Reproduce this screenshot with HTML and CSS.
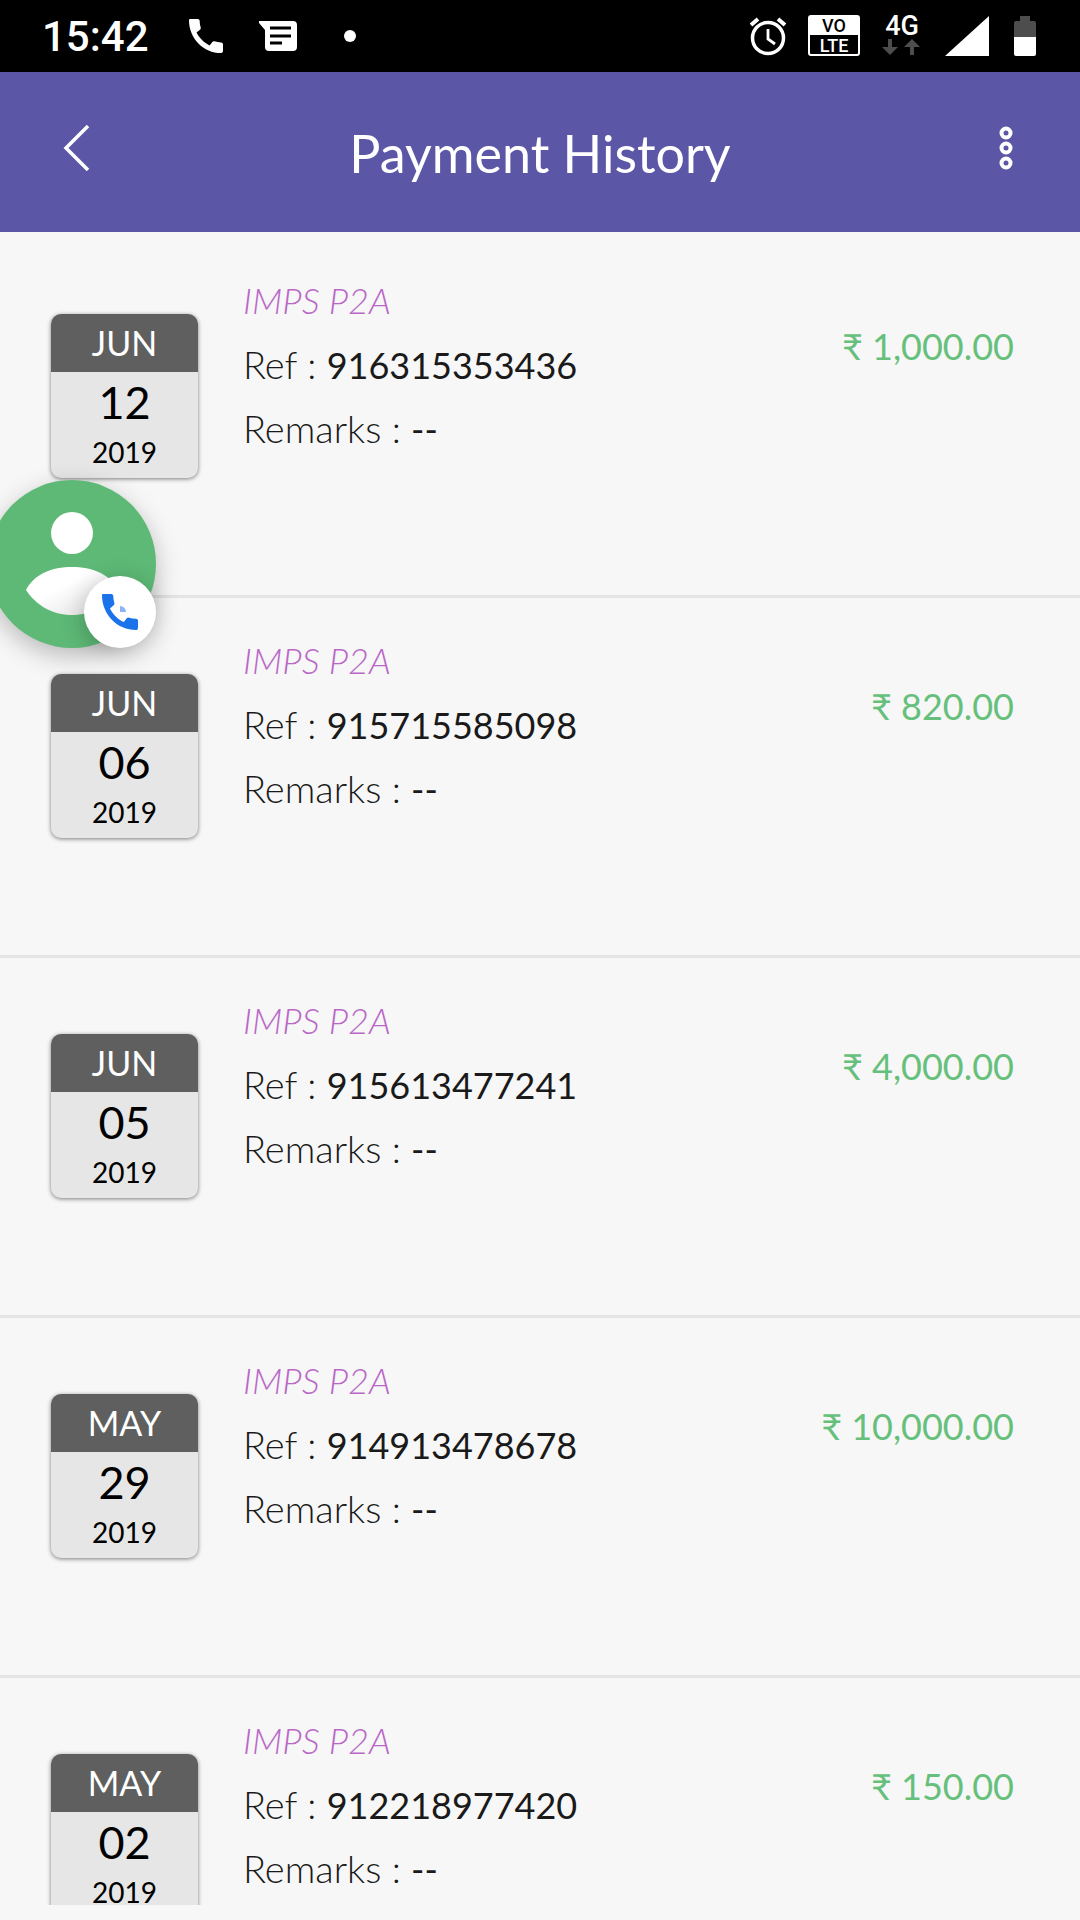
FILE: index.html
```
<!DOCTYPE html>
<html lang="en">
<head>
    <meta charset="UTF-8">
    <meta name="viewport" content="width=device-width, initial-scale=1.0">
    <title>Payment History</title>
    <link rel="stylesheet" href="styles.css">
</head>
<body>
    <div class="status-bar">
        <div class="status-left">
            <span class="clock">15:42</span>
            <svg width="34" height="34" viewBox="3 3 18 18" fill="#fff"><path d="M20.010 15.380c-1.230 0-2.420-.2-3.530-.56a.98.98 0 0 0-1.010.24l-1.570 1.970c-2.830-1.350-5.480-3.900-6.890-6.830l1.950-1.660c.27-.28.35-.67.24-1.020-.37-1.110-.56-2.300-.56-3.530 0-.54-.45-.99-.99-.99H3.500c-.3 0-.5.200-.5.600C3 13.280 10.730 21 20.010 21c.71 0 .99-.63.99-1.180v-3.450c0-.54-.45-.99-.99-.99z"/></svg>
            <svg width="38" height="30" viewBox="0 0 38 30"><path d="M0 0h34a4 4 0 0 1 4 4v22a4 4 0 0 1-4 4H10a4 4 0 0 1-4-4V9L0 2z" fill="#fff"/><path d="M11 7h21M11 15h21M11 22h12" stroke="#000" stroke-width="3"/></svg>
            <svg width="34" height="12" viewBox="0 0 34 12"><circle cx="17" cy="6" r="6" fill="#fff"/></svg>
        </div>
        <div class="status-right">
            <svg width="36" height="40" viewBox="0 0 36 40" fill="none" stroke="#fff"><circle cx="18" cy="22" r="15.500" stroke-width="3.500"/><path d="M18 13v10l7 5" stroke-width="2.800"/><path d="M1 9l7-6M28 3l7 6" stroke-width="4"/></svg>
            <svg class="volte" width="52" height="42" viewBox="0 0 52 42"><rect x="1" y="1" width="50" height="39" rx="2" fill="#000" stroke="#fff" stroke-width="2"/><path d="M1 1h50v19H1z" fill="#fff"/><text x="26" y="17" fill="#000">VO</text><text x="26" y="37" fill="#fff">LTE</text></svg>
            <svg class="network" width="40" height="42" viewBox="0 0 40 42"><text x="20" y="20" fill="#fff">4G</text><path d="M6 24h4v8h6l-8 8-8-8h6zM28 40h4v-8h6l-8-8-8 8h6z" fill="#4d4d4d"/></svg>
            <svg width="46" height="40" viewBox="0 0 46 40"><path d="M1 40L45 0v40z" fill="#fff"/></svg>
            <svg width="24" height="40" viewBox="0 0 24 40"><path d="M8 0h10v5h4a2 2 0 0 1 2 2v14H2V7a2 2 0 0 1 2-2h4z" fill="#4d4d4d"/><path d="M2 21h22v17a2 2 0 0 1-2 2H4a2 2 0 0 1-2-2z" fill="#fff"/></svg>
        </div>
    </div>

    <header class="header">
        <button class="icon-btn" aria-label="Back">
            <svg width="30" height="48" viewBox="0 0 30 48" fill="none" stroke="#fff" stroke-width="3.500"><path d="M28 2L6 24l22 22"/></svg>
        </button>
        <h1>Payment History</h1>
        <button class="icon-btn" aria-label="More options">
            <svg width="30" height="48" viewBox="0 0 30 48" fill="none" stroke="#fff" stroke-width="4"><circle cx="16" cy="9" r="4.500"/><circle cx="16" cy="24" r="4.500"/><circle cx="16" cy="39" r="4.500"/></svg>
        </button>
    </header>

    <ul class="payments">
        <li class="payment">
            <div class="date">
                <div class="month">JUN</div>
                <div class="day">12</div>
                <div class="year">2019</div>
            </div>
            <div class="details">
                <p class="type">IMPS P2A</p>
                <p>Ref : <span class="value">916315353436</span></p>
                <p>Remarks : <span class="value">--</span></p>
            </div>
            <div class="amount">₹ 1,000.00</div>
        </li>
        <li class="payment">
            <div class="date">
                <div class="month">JUN</div>
                <div class="day">06</div>
                <div class="year">2019</div>
            </div>
            <div class="details">
                <p class="type">IMPS P2A</p>
                <p>Ref : <span class="value">915715585098</span></p>
                <p>Remarks : <span class="value">--</span></p>
            </div>
            <div class="amount">₹ 820.00</div>
        </li>
        <li class="payment">
            <div class="date">
                <div class="month">JUN</div>
                <div class="day">05</div>
                <div class="year">2019</div>
            </div>
            <div class="details">
                <p class="type">IMPS P2A</p>
                <p>Ref : <span class="value">915613477241</span></p>
                <p>Remarks : <span class="value">--</span></p>
            </div>
            <div class="amount">₹ 4,000.00</div>
        </li>
        <li class="payment">
            <div class="date">
                <div class="month">MAY</div>
                <div class="day">29</div>
                <div class="year">2019</div>
            </div>
            <div class="details">
                <p class="type">IMPS P2A</p>
                <p>Ref : <span class="value">914913478678</span></p>
                <p>Remarks : <span class="value">--</span></p>
            </div>
            <div class="amount">₹ 10,000.00</div>
        </li>
        <li class="payment">
            <div class="date">
                <div class="month">MAY</div>
                <div class="day">02</div>
                <div class="year">2019</div>
            </div>
            <div class="details">
                <p class="type">IMPS P2A</p>
                <p>Ref : <span class="value">912218977420</span></p>
                <p>Remarks : <span class="value">--</span></p>
            </div>
            <div class="amount">₹ 150.00</div>
        </li>
    </ul>

    <!-- floating call bubble -->
    <button class="call-bubble" aria-label="Ongoing call">
        <svg width="168" height="168" viewBox="0 0 168 168">
            <defs>
                <linearGradient id="body" x1="0" y1="0" x2="1" y2="1">
                    <stop offset="0.400" stop-color="#fff"/>
                    <stop offset="1" stop-color="#ddd"/>
                </linearGradient>
            </defs>
            <circle cx="84" cy="53" r="21" fill="#fff"/>
            <path d="M38 110C46 94 64 87 84 87s38 7 46 23c-10 15-26 25-46 25s-36-10-46-25z" fill="url(#body)"/>
        </svg>
        <span class="call-badge">
            <svg width="36" height="36" viewBox="3 3 18 18"><path fill="#1a73e8" d="M20.010 15.380c-1.230 0-2.420-.2-3.530-.56a.98.98 0 0 0-1.010.24l-1.570 1.970c-2.830-1.350-5.480-3.900-6.890-6.830l1.950-1.660c.27-.28.35-.67.24-1.020-.37-1.110-.56-2.300-.56-3.530 0-.54-.45-.99-.99-.99H3.500c-.3 0-.5.200-.5.600C3 13.280 10.730 21 20.010 21c.71 0 .99-.63.99-1.180v-3.450c0-.54-.45-.99-.99-.99z"/><path fill="#8ab4f3" d="M12 9a3 3 0 0 1 3 3h-3z"/></svg>
        </span>
    </button>
</body>
</html>
```
FILE: styles.css
```
* {
    box-sizing: border-box;
}
body {
    margin: 0;
    height: 100vh;
    display: flex;
    flex-direction: column;
    overflow: hidden;
    font-family: Lato, "Liberation Sans", sans-serif;
    background-color: #f7f7f7;
    color: #1a1a1a;
}
button {
    border: none;
    padding: 0;
    cursor: pointer;
}
svg {
    display: block;
    flex: none;
    overflow: visible;
}
.status-bar {
    flex: none;
    height: 72px;
    padding: 0 44px 0 42px;
    display: flex;
    justify-content: space-between;
    background-color: #000;
    color: #fff;
    font-family: Roboto, sans-serif;
}
.status-left,
.status-right {
    display: flex;
    align-items: center;
}
.status-left {
    gap: 36px;
}
.status-right {
    gap: 22px;
}
.clock {
    margin-right: 4px;
    font-size: 42px;
    font-weight: 500;
}
.volte text,
.network text {
    font-weight: 500;
    text-anchor: middle;
}
.volte text {
    font-size: 18px;
}
.network text {
    font-size: 27px;
}
.header {
    flex: none;
    height: 160px;
    padding: 0 60px 8px;
    display: flex;
    align-items: center;
    justify-content: space-between;
    background-color: #5b57a6;
    color: #fff;
}
.header h1 {
    margin: 0;
    padding-top: 10px;
    font-size: 52px;
    font-weight: 400;
}
.icon-btn {
    background: none;
}
.payments {
    flex: 1;
    min-height: 0;
    overflow: hidden;
    margin: 0 0 15px;
    padding: 6px 0 0;
    list-style: none;
}
.payment {
    height: 360px;
    padding: 30px 66px 0 51px;
    display: flex;
    align-items: flex-start;
    border-bottom: 3px solid #e4e4e4;
}
.date {
    width: 147px;
    margin-top: 46px;
    padding-bottom: 2px;
    border-radius: 10px;
    overflow: hidden;
    background-color: #e6e6e6;
    box-shadow: 0 1px 4px rgba(0, 0, 0, 0.5);
    color: #000;
    text-align: center;
}
.month {
    margin-bottom: 4px;
    font-size: 34px;
    line-height: 58px;
    background-color: #5f5f5f;
    color: #fff;
}
.day {
    font-size: 45px;
    line-height: 52px;
}
.year {
    font-size: 28px;
    line-height: 48px;
}
.details {
    flex: 1;
    margin-left: 45px;
    font-size: 38px;
    font-weight: 300;
    line-height: 64px;
}
.details p {
    margin: 0;
}
.details .type {
    font-size: 36px;
    font-style: italic;
    color: #b968c7;
}
.value {
    font-size: 36px;
    font-weight: 400;
    line-height: 1;
}
.amount {
    margin-top: 46px;
    font-size: 36px;
    line-height: 64px;
    color: #66c07c;
}
.call-bubble {
    position: absolute;
    top: 480px;
    left: -12px;
    width: 168px;
    height: 168px;
    border-radius: 50%;
    background-color: #5db975;
    box-shadow: 0 8px 24px rgba(0, 0, 0, 0.25);
}
.call-badge {
    position: absolute;
    right: 0;
    bottom: 0;
    width: 72px;
    height: 72px;
    display: flex;
    align-items: center;
    justify-content: center;
    border-radius: 50%;
    background-color: #fff;
    box-shadow: 0 6px 24px rgba(0, 0, 0, 0.25);
}
```
